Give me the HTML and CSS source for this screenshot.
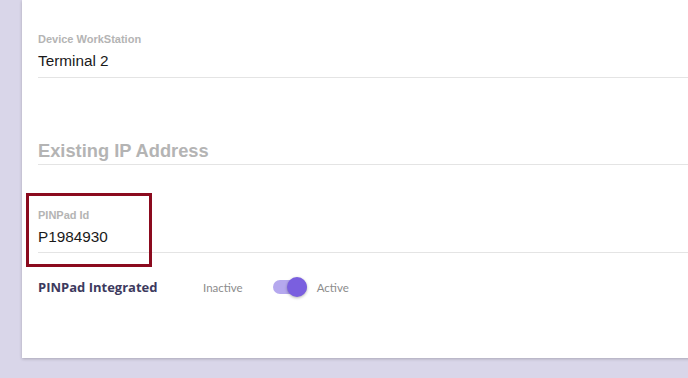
FILE: index.html
```html
<!DOCTYPE html>
<html lang="en">
<head>
    <meta charset="UTF-8">
    <title>Device Settings</title>
    <meta name="viewport" content="width=device-width, initial-scale=1.0">
    <link rel="stylesheet" href="styles.css">
</head>
<body>
    <div class="card">
        <div class="field">
            <label class="field-label">Device WorkStation</label>
            <div class="field-value">Terminal 2</div>
        </div>

        <h2 class="section-title">Existing IP Address</h2>

        <div class="field field-pinpad">
            <label class="field-label">PINPad Id</label>
            <div class="field-value">P1984930</div>
            <div class="highlight"></div>
        </div>

        <div class="toggle-row">
            <span class="toggle-title">PINPad Integrated</span>
            <span class="toggle-text">Inactive</span>
            <span class="switch" role="switch" aria-checked="true">
                <span class="switch-track"></span>
                <span class="switch-thumb"></span>
            </span>
            <span class="toggle-text">Active</span>
        </div>
    </div>
</body>
</html>
```

FILE: styles.css
```css
:root {
    --bg-color: #d9d6e9;
    --line-color: #e4e4e4;
    --label-color: #b4b4b4;
    --text-color: #1a1a1a;
    --accent: #7a5fdf;
    --accent-light: #b5a8ee;
    --mark-color: #8b0a1e;
}

html, body {
    margin: 0;
    height: 100%;
    overflow: hidden;
}

body {
    background-color: var(--bg-color);
    font-family: 'Liberation Sans', Arial, sans-serif;
}

.card {
    margin-left: 22px;
    width: 700px;
    padding: 32px 0 59px 16px;
    box-sizing: border-box;
    background-color: white;
    box-shadow: 0 1px 3px rgba(0, 0, 0, 0.22);
}

.field {
    padding-bottom: 6px;
    border-bottom: 1px solid var(--line-color);
}

.field-label {
    display: block;
    font-size: 11px;
    line-height: 14px;
    font-weight: bold;
    color: var(--label-color);
    margin-bottom: 5px;
}

.field-value {
    font-size: 15.3px;
    line-height: 20px;
    color: var(--text-color);
}

.section-title {
    margin: 62px 0 0;
    padding-bottom: 2px;
    font-size: 18.3px;
    line-height: 22px;
    font-weight: bold;
    color: var(--label-color);
    border-bottom: 1px solid var(--line-color);
}

.field-pinpad {
    position: relative;
    margin-top: 43px;
    padding-bottom: 5px;
}

/* annotation box around the PINPad id */
.highlight {
    position: absolute;
    left: -12px;
    top: -15px;
    width: 126px;
    height: 74px;
    box-sizing: border-box;
    border: 3px solid var(--mark-color);
}

.toggle-row {
    display: flex;
    align-items: center;
    height: 24px;
    margin-top: 22px;
}

.toggle-title {
    width: 165px;
    font-family: 'Open Sans', Lato, sans-serif;
    font-size: 13px;
    font-weight: bold;
    color: #3d3a5e;
}

.toggle-text {
    font-family: Lato, 'Open Sans', sans-serif;
    font-size: 11.5px;
    color: #8c8c8c;
}

.switch {
    position: relative;
    width: 34px;
    height: 20px;
    margin: 0 10px 0 30px;
}

.switch-track {
    position: absolute;
    left: 0;
    top: 3px;
    width: 34px;
    height: 14px;
    border-radius: 7px;
    background-color: var(--accent-light);
}

.switch-thumb {
    position: absolute;
    right: 0;
    top: 0;
    width: 20px;
    height: 20px;
    border-radius: 50%;
    background-color: var(--accent);
    box-shadow: 0 1px 3px rgba(0, 0, 0, 0.3);
}
```
